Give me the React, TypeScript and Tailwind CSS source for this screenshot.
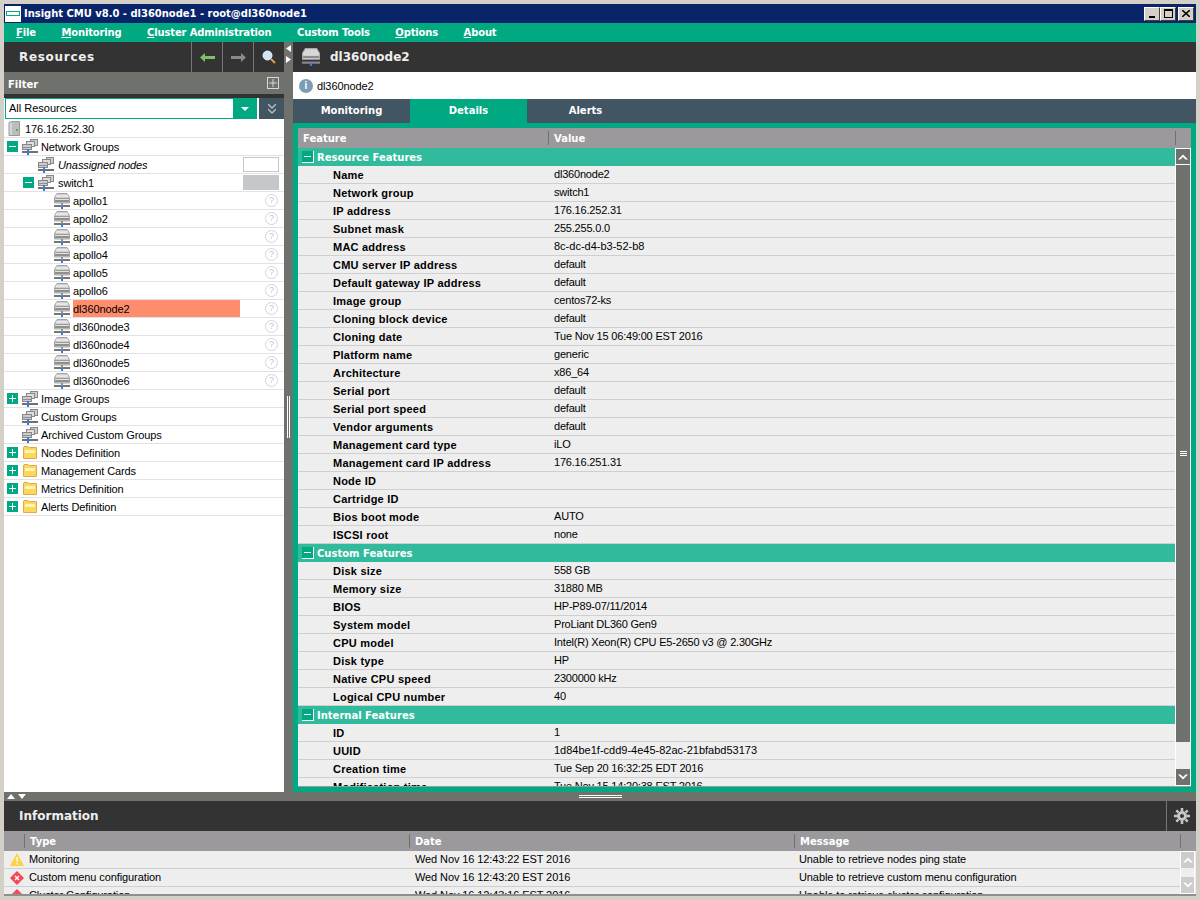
import React from "react";

const Node = () => (
  <svg width="16" height="16" viewBox="0 0 16 16" className="shrink-0">
    <path d="M3 .5h10l2.500 4v5.500H.5V4.500z" fill="#cdcdcd" stroke="#a4a4a4" />
    <rect x="2" y="2" width="12" height="2" fill="#e6e6e6" />
    <rect x="1" y="5" width="14" height="1" fill="#9c9c9c" />
    <rect x="1" y="6" width="14" height="1" fill="#e2e2e2" />
    <rect x="1" y="7" width="14" height="2" fill="#8f8f8f" />
    <rect x="0" y="12" width="16" height="2" fill="#757575" />
    <rect x="7" y="10" width="2" height="3" fill="#8f8f8f" />
    <rect x="7" y="13" width="2" height="3" fill="#3b78e0" />
  </svg>
);
const Group = () => (
  <svg width="16" height="16" viewBox="0 0 16 16" className="shrink-0">
    <rect x="8.500" y="0.500" width="7" height="6" fill="#cfcfcf" stroke="#888" />
    <rect x="4.500" y="2.500" width="8" height="5" fill="#dedede" stroke="#888" />
    <rect x="0.500" y="5.500" width="9" height="5" fill="#cccccc" stroke="#888" />
    <rect x="1" y="8" width="8" height="1" fill="#8f8f8f" />
    <rect x="0" y="12" width="16" height="2" fill="#707070" />
    <rect x="5" y="10" width="2" height="6" fill="#3b78e0" />
  </svg>
);
const Folder = () => (
  <svg width="14" height="13" viewBox="0 0 14 13" className="shrink-0">
    <path d="M.5 2V12.500H13.500V1.500H6L5 .5H1z" fill="#fbd75a" stroke="#e0a850" />
    <rect x="2" y="4" width="10" height="3" fill="#fff3b8" />
  </svg>
);
const Pm = ({ open }: { open: boolean }) => (
  <span className="flex h-[11px] w-[11px] shrink-0 items-center justify-center bg-[#01a982] text-white">
    <svg width="7" height="7" viewBox="0 0 7 7">
      <rect x="0" y="3" width="7" height="1" fill="#fff" />
      {!open && <rect x="3" y="0" width="1" height="7" fill="#fff" />}
    </svg>
  </span>
);
const Help = () => (
  <span className="mr-[6px] flex h-[13px] w-[13px] items-center justify-center rounded-full border border-[#d5d5d5] text-[9px] leading-none text-[#c4c4c4]">?</span>
);

function NodeRow({ name, sel }: { name: string; sel?: boolean }) {
  return (
    <div className="flex h-[18px] items-center border-b border-[#e2e2e2] pl-[50px]">
      <Node />
      <span className={`ml-[3px] flex h-[17px] w-[167px] items-center pt-[2px] ${sel ? "bg-[#ff8d6d]" : ""}`}>{name}</span>
      <span className="ml-auto"><Help /></span>
    </div>
  );
}
function TopRow({ label, pm, icon }: { label: string; pm?: boolean; icon: "group" | "folder" }) {
  return (
    <div className="flex h-[18px] items-center border-b border-[#e2e2e2] pl-[3px]">
      <span className="w-[11px]">{pm !== undefined && <Pm open={pm} />}</span>
      <span className="ml-[4px] flex w-[16px] justify-center">{icon === "group" ? <Group /> : <Folder />}</span>
      <span className="ml-[3px] pt-[2px]">{label}</span>
    </div>
  );
}

const resource: [string, string][] = [
  ["Name", "dl360node2"], ["Network group", "switch1"], ["IP address", "176.16.252.31"], ["Subnet mask", "255.255.0.0"],
  ["MAC address", "8c-dc-d4-b3-52-b8"], ["CMU server IP address", "default"], ["Default gateway IP address", "default"],
  ["Image group", "centos72-ks"], ["Cloning block device", "default"], ["Cloning date", "Tue Nov 15 06:49:00 EST 2016"],
  ["Platform name", "generic"], ["Architecture", "x86_64"], ["Serial port", "default"], ["Serial port speed", "default"],
  ["Vendor arguments", "default"], ["Management card type", "iLO"], ["Management card IP address", "176.16.251.31"],
  ["Node ID", ""], ["Cartridge ID", ""], ["Bios boot mode", "AUTO"], ["ISCSI root", "none"],
];
const custom: [string, string][] = [
  ["Disk size", "558 GB"], ["Memory size", "31880 MB"], ["BIOS", "HP-P89-07/11/2014"], ["System model", "ProLiant DL360 Gen9"],
  ["CPU model", "Intel(R) Xeon(R) CPU E5-2650 v3 @ 2.30GHz"], ["Disk type", "HP"], ["Native CPU speed", "2300000 kHz"], ["Logical CPU number", "40"],
];
const internal: [string, string][] = [
  ["ID", "1"], ["UUID", "1d84be1f-cdd9-4e45-82ac-21bfabd53173"], ["Creation time", "Tue Sep 20 16:32:25 EDT 2016"], ["Modification time", "Tue Nov 15 14:20:38 EST 2016"],
];

const GroupHead = ({ label }: { label: string }) => (
  <div className="flex h-[18px] items-center bg-[#32ba9c] pl-[4px] text-[10px] font-bold text-white [font-family:'DejaVu_Sans',sans-serif]">
    <span className="flex h-[12px] w-[12px] items-center justify-center border-b border-r border-white bg-[#01a982]">
      <span className="h-px w-[7px] bg-white" />
    </span>
    <span className="ml-[3px]">{label}</span>
  </div>
);
const Row = ({ k, v }: { k: string; v: string }) => (
  <div className="flex h-[18px] shrink-0 items-center border-b border-[#cfcfcf] bg-[#eeeeee]">
    <span className="w-[256px] pl-[35px] pt-[2px] font-bold tracking-[0.23px]">{k}</span>
    <span className={k === "UUID" || k === "MAC address" ? "tracking-normal" : "tracking-[-0.2px]"}>{v}</span>
  </div>
);
const InfoRow = ({ kind, a, b, c }: { kind: "warn" | "err"; a: string; b: string; c: string }) => (
  <div className="flex h-[18px] shrink-0 items-center border-b border-[#cfcfcf] bg-[#eeeeee]">
    <span className="flex w-[25px] justify-center">
      {kind === "warn" ? (
        <svg width="14" height="13" viewBox="0 0 14 13"><path d="M7 0l7 13H0z" fill="#ffd144" /><rect x="6.400" y="4" width="1.400" height="5" fill="#fff" /><rect x="6.400" y="10" width="1.400" height="1.500" fill="#fff" /></svg>
      ) : (
        <svg width="14" height="14" viewBox="0 0 14 14"><path d="M7 0l7 7-7 7-7-7z" fill="#f04953" /><path d="M5 5l4 4M9 5l-4 4" stroke="#fff" strokeWidth="1.400" /></svg>
      )}
    </span>
    <span className="w-[386px] tracking-[-0.1px]">{a}</span>
    <span className="w-[384px] tracking-[-0.1px]">{b}</span>
    <span className="tracking-[-0.1px]">{c}</span>
  </div>
);
const Chevron = ({ up, color = "#fff" }: { up?: boolean; color?: string }) => (
  <svg width="10" height="6" viewBox="0 0 10 6">
    <path d={up ? "M0 5.500L5 .5l5 5H7.500L5 3 2.500 5.500z" : "M0 .5L5 5.500l5-5H7.500L5 3 2.500 .5z"} fill={color} />
  </svg>
);
const Tab = ({ label, active }: { label: string; active?: boolean }) => (
  <div className={`flex h-full w-[117px] items-center justify-center pb-[2px] text-[10px] font-bold text-white [font-family:'DejaVu_Sans',sans-serif] ${active ? "bg-[#01a982]" : "bg-[#425563]"}`}>{label}</div>
);
const Menu = ({ u, rest }: { u: string; rest: string }) => (
  <span><span className="underline">{u}</span>{rest}</span>
);
const WinBtn = ({ children, className = "" }: { children: React.ReactNode; className?: string }) => (
  <span className={`flex h-[14px] w-[16px] items-center justify-center border-b border-l border-r border-t border-b-[#404040] border-l-white border-r-[#404040] border-t-white bg-[#d4d0c8] ${className}`}>{children}</span>
);

export default function App() {
  return (
    <div className="flex h-[900px] w-[1200px] flex-col overflow-hidden border-x-4 border-b-4 border-t-4 border-[#d4d0c8] bg-[#6f716c] text-[11px] text-black [font-family:'Liberation_Sans',Arial,sans-serif]">
      <div className="flex h-[19px] shrink-0 items-center bg-[#0a246a] text-[10px] font-bold text-white [font-family:'DejaVu_Sans',sans-serif]">
        <span className="ml-px flex h-[16px] w-[16px] items-center justify-center bg-white">
          <span className="h-[5px] w-[14px] border border-[#01a982]" />
        </span>
        <span className="ml-[3px] tracking-[-0.03px]">Insight CMU v8.0 - dl360node1 - root@dl360node1</span>
        <div className="ml-auto mr-[2px] flex">
          <WinBtn><span className="mt-[7px] h-[2px] w-[6px] bg-black" /></WinBtn>
          <WinBtn><span className="h-[9px] w-[9px] border border-t-2 border-black" /></WinBtn>
          <WinBtn className="ml-[2px]">
            <svg width="8" height="7" viewBox="0 0 8 7"><path d="M0 0l8 7M8 0L0 7" stroke="#000" strokeWidth="1.500" /></svg>
          </WinBtn>
        </div>
      </div>
      <div className="flex h-[19px] shrink-0 items-center gap-[25.5px] bg-[#01a982] pl-[12px] text-[10px] font-bold tracking-[-0.15px] text-white [font-family:'DejaVu_Sans',sans-serif]">
        <Menu u="F" rest="ile" />
        <Menu u="M" rest="onitoring" />
        <Menu u="C" rest="luster Administration" />
        <Menu u="" rest="Custom Tools" />
        <Menu u="O" rest="ptions" />
        <Menu u="A" rest="bout" />
      </div>

      <div className="flex min-h-0 flex-1">
        <div className="flex w-[280px] shrink-0 flex-col bg-white">
          <div className="flex h-[30px] shrink-0 items-stretch bg-[#333333] text-white">
            <span className="flex flex-1 items-center pl-[15px] text-[12px] font-bold tracking-[0.7px] text-[#eeeeee] [font-family:'DejaVu_Sans',sans-serif]">Resources</span>
            <span className="flex w-[31px] items-center justify-center border-l border-[#777]">
              <svg width="15" height="9" viewBox="0 0 15 9"><path d="M5 0v3h10v3H5v3L0 4.500z" fill="#7fbf6a" /></svg>
            </span>
            <span className="flex w-[31px] items-center justify-center border-l border-[#777]">
              <svg width="15" height="9" viewBox="0 0 15 9"><path d="M10 0v3H0v3h10v3l5-4.500z" fill="#8a8a8a" /></svg>
            </span>
            <span className="flex w-[31px] items-center justify-center border-l border-[#777]">
              <svg width="14" height="14" viewBox="0 0 14 14"><circle cx="5.500" cy="5.500" r="4.500" fill="#cfe6f7" stroke="#e8f0f6" /><path d="M9 9l4 4" stroke="#d9a050" strokeWidth="2" /></svg>
            </span>
          </div>
          <div className="flex h-[22px] shrink-0 items-center justify-between bg-[#6f716c] pl-[4px] pr-[5px] text-[10px] font-bold text-white [font-family:'DejaVu_Sans',sans-serif]">
            <span className="pt-[3px]">Filter</span>
            <svg width="12" height="12" viewBox="0 0 12 12" className="mb-[1px]"><rect x=".5" y=".5" width="11" height="11" fill="none" stroke="#d8d8d8" /><path d="M6 2v8M2 6h8" stroke="#d8d8d8" /></svg>
          </div>
          <div className="w-full shrink-0 bg-[#333333] pt-[4px]">
            <div className="flex h-[22px] bg-white pl-[1px]">
              <div className="flex h-[21px] w-[252px] border border-[#01a982]">
                <span className="flex flex-1 items-center pl-[3px]">All Resources</span>
                <span className="flex w-[23px] items-center justify-center bg-[#01a982]">
                  <svg width="8" height="4" viewBox="0 0 8 4"><path d="M0 0h8L4 4z" fill="#fff" /></svg>
                </span>
              </div>
              <span className="ml-[2px] flex h-[21px] w-[25px] items-center justify-center bg-[#425563]">
                <svg width="8" height="10" viewBox="0 0 8 10"><path d="M0 0l4 4 4-4M0 5l4 4 4-4" fill="none" stroke="#b8c0c6" strokeWidth="1.400" /></svg>
              </span>
            </div>
          </div>
          <div className="min-h-0 flex-1 overflow-hidden bg-white tracking-[-0.1px]">
            <div className="flex h-[18px] items-center border-b border-[#e2e2e2] pl-[4px]">
              <svg width="12" height="15" viewBox="0 0 12 15" className="shrink-0"><path d="M1 1.500L4 .5h7.500v14H1z" fill="#d6d6d6" stroke="#999" /><rect x="4" y="1" width="7" height="13" fill="#bdbdbd" /><rect x="8" y="8" width="2" height="2" fill="#4caf50" /></svg>
              <span className="ml-[5px] pt-[2px]">176.16.252.30</span>
            </div>
            <TopRow label="Network Groups" pm icon="group" />
            <div className="flex h-[18px] items-center border-b border-[#e2e2e2] pl-[34px]">
              <Group />
              <span className="ml-[4px] pt-[2px] italic">Unassigned nodes</span>
              <span className="ml-auto mr-[5px] h-[15px] w-[36px] border border-[#c5c8c8] bg-white" />
            </div>
            <div className="flex h-[18px] items-center border-b border-[#e2e2e2] pl-[19px]">
              <Pm open />
              <span className="ml-[4px]"><Group /></span>
              <span className="ml-[4px] pt-[2px]">switch1</span>
              <span className="ml-auto mr-[5px] h-[15px] w-[36px] bg-[#c5c8cb]" />
            </div>
            {["apollo1", "apollo2", "apollo3", "apollo4", "apollo5", "apollo6"].map((n) => <NodeRow key={n} name={n} />)}
            <NodeRow name="dl360node2" sel />
            {["dl360node3", "dl360node4", "dl360node5", "dl360node6"].map((n) => <NodeRow key={n} name={n} />)}
            <TopRow label="Image Groups" pm={false} icon="group" />
            <TopRow label="Custom Groups" icon="group" />
            <TopRow label="Archived Custom Groups" icon="group" />
            <TopRow label="Nodes Definition" pm={false} icon="folder" />
            <TopRow label="Management Cards" pm={false} icon="folder" />
            <TopRow label="Metrics Definition" pm={false} icon="folder" />
            <TopRow label="Alerts Definition" pm={false} icon="folder" />
          </div>
        </div>

        <div className="flex w-[9px] shrink-0 flex-col items-center bg-[#6f716c] pt-[3px]">
          <svg width="5" height="18" viewBox="0 0 5 18"><path d="M5 0v7L0 3.500zM0 11v7l5-3.500z" fill="#fff" /></svg>
          <span className="mt-[333px] h-[42px] w-[3px] border-x border-white" />
        </div>

        <div className="flex min-w-0 flex-1 flex-col">
          <div className="flex h-[30px] shrink-0 items-center bg-[#333333] pl-[9px]">
            <svg width="18" height="18" viewBox="0 0 16 16" className="shrink-0">
              <path d="M3 .5h10l2.500 4v5.500H.5V4.500z" fill="#d8d8d8" stroke="#aaa" />
              <rect x="1" y="7" width="14" height="2" fill="#8c8c8c" />
              <rect x="0" y="12" width="16" height="2" fill="#888" />
              <rect x="7" y="13" width="2" height="3" fill="#3b78e0" />
            </svg>
            <span className="ml-[10px] text-[12px] font-bold text-[#eeeeee] [font-family:'DejaVu_Sans',sans-serif]">dl360node2</span>
          </div>
          <div className="flex h-[27px] shrink-0 items-center bg-white pl-[6px]">
            <span className="flex h-[14px] w-[14px] items-center justify-center rounded-full bg-[#7c9cb4] text-[10px] font-bold leading-none text-white">i</span>
            <span className="ml-[4px] pt-[2px] tracking-[-0.1px]">dl360node2</span>
          </div>
          <div className="flex h-[24px] shrink-0 bg-[#425563]">
            <Tab label="Monitoring" />
            <Tab label="Details" active />
            <Tab label="Alerts" />
          </div>
          <div className="flex min-h-0 flex-1 flex-col border-x-[5px] border-y-[5px] border-[#01a982] bg-white">
            <div className="flex h-[20px] shrink-0 items-center bg-[#9b999b] text-[10px] font-bold text-white [font-family:'DejaVu_Sans',sans-serif]">
              <span className="flex h-[14px] w-[251px] items-center border-r border-[#6f716c] pl-[5px]">Feature</span>
              <span className="pl-[5px]">Value</span>
              <span className="ml-auto mr-[15px] h-[14px] w-px bg-[#6f716c]" />
            </div>
            <div className="flex min-h-0 flex-1 border-b border-[#9b999b]">
              <div className="min-w-0 flex-1 overflow-hidden">
                <GroupHead label="Resource Features" />
                {resource.map(([k, v]) => <Row key={k} k={k} v={v} />)}
                <GroupHead label="Custom Features" />
                {custom.map(([k, v]) => <Row key={k} k={k} v={v} />)}
                <GroupHead label="Internal Features" />
                {internal.map(([k, v]) => <Row key={k} k={k} v={v} />)}
              </div>
              <div className="flex w-[16px] shrink-0 flex-col border border-white bg-[#eeeeee]">
                <span className="flex h-[16px] shrink-0 items-center justify-center border-b border-white bg-[#6f716c]"><Chevron up /></span>
                <span className="flex h-[577px] shrink-0 flex-col items-center justify-center gap-px bg-[#6f716c]">
                  <span className="h-px w-[7px] bg-white" />
                  <span className="h-px w-[7px] bg-white" />
                  <span className="h-px w-[7px] bg-white" />
                </span>
                <span className="flex-1" />
                <span className="flex h-[16px] shrink-0 items-center justify-center bg-[#6f716c]"><Chevron /></span>
              </div>
            </div>
          </div>
        </div>
      </div>

      <div className="flex h-[9px] shrink-0 items-center bg-[#6f716c] pl-[3px]">
        <svg width="19" height="5" viewBox="0 0 19 5"><path d="M0 5l4-5 4 5zM11 0h8l-4 5z" fill="#fff" /></svg>
        <span className="ml-[553px] h-[3px] w-[43px] border-y border-white" />
      </div>
      <div className="flex h-[30px] shrink-0 items-stretch bg-[#333333]">
        <span className="flex flex-1 items-center pl-[15px] text-[12px] font-bold text-[#eeeeee] [font-family:'DejaVu_Sans',sans-serif]">Information</span>
        <span className="flex w-[30px] items-center justify-center border-l border-[#777]">
          <svg width="16" height="16" viewBox="0 0 16 16">
            <circle cx="8" cy="8" r="3.500" fill="none" stroke="#c8c8c8" strokeWidth="3" />
            <path d="M8 0v3M8 13v3M0 8h3M13 8h3M2.300 2.300l2 2M11.700 11.700l2 2M13.700 2.300l-2 2M4.300 11.700l-2 2" stroke="#c8c8c8" strokeWidth="2.500" />
          </svg>
        </span>
      </div>
      <div className="flex h-[20px] shrink-0 items-center bg-[#9b999b] text-[10px] font-bold text-white [font-family:'DejaVu_Sans',sans-serif]">
        <span className="h-[14px] w-[21px] border-r border-[#6f716c]" />
        <span className="flex h-[14px] w-[385px] items-center border-r border-[#6f716c] pl-[5px]">Type</span>
        <span className="flex h-[14px] w-[385px] items-center border-r border-[#6f716c] pl-[5px]">Date</span>
        <span className="pl-[5px]">Message</span>
        <span className="ml-auto mr-[15px] h-[14px] w-px bg-[#6f716c]" />
      </div>
      <div className="flex h-[45px] shrink-0 border-b-2 border-[#8f8f8f] bg-[#eeeeee]">
        <div className="min-w-0 flex-1 overflow-hidden">
          <InfoRow kind="warn" a="Monitoring" b="Wed Nov 16 12:43:22 EST 2016" c="Unable to retrieve nodes ping state" />
          <InfoRow kind="err" a="Custom menu configuration" b="Wed Nov 16 12:43:20 EST 2016" c="Unable to retrieve custom menu configuration" />
          <InfoRow kind="err" a="Cluster Configuration" b="Wed Nov 16 12:43:16 EST 2016" c="Unable to retrieve cluster configuration" />
        </div>
        <div className="mr-px flex w-[15px] shrink-0 flex-col justify-between border border-white">
          <span className="flex h-[16px] items-center justify-center bg-[#cccccc]"><Chevron up /></span>
          <span className="flex h-[16px] items-center justify-center bg-[#cccccc]"><Chevron /></span>
        </div>
      </div>
    </div>
  );
}
